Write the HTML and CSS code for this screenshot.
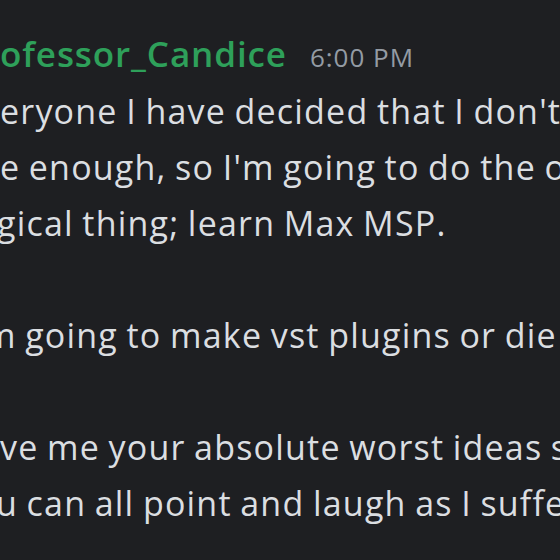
FILE: index.html
```html
<!DOCTYPE html>
<html lang="en">
<head>
<meta charset="utf-8">
<title>Message</title>
<link rel="stylesheet" href="styles.css">
</head>
<body>
<div class="message">
  <div class="header">
    <span class="username">ofessor_Candice</span>
    <span class="time">6:00 PM</span>
  </div>
  <div class="content">
    <div class="line">eryone I have decided that I don't</div>
    <div class="line">e enough, so I'm going to do the obvious</div>
    <div class="line cut-g">gical thing; learn Max MSP.</div>
    <div class="line blank"></div>
    <div class="line cut-m">m going to make vst plugins or die</div>
    <div class="line blank"></div>
    <div class="line">ve me your absolute worst ideas so</div>
    <div class="line cut-u">u can all point and laugh as I suffer</div>
  </div>
</div>
</body>
</html>
```

FILE: styles.css
```css
html, body {
  margin: 0;
  padding: 0;
  background: #1e1f22;
  overflow: hidden;
}
body {
  width: 560px;
  height: 560px;
  font-family: "Open Sans", "Noto Sans", sans-serif;
}
.message {
  padding-top: 32px;
  white-space: nowrap;
}
.header {
  display: flex;
  align-items: baseline;
  gap: 23px;
  height: 51px;
}
.username {
  color: #2ea05a;
  font-size: 35px;
  font-weight: 600;
  letter-spacing: 0.9px;
  line-height: 44px;
}
.time {
  color: #949ba4;
  font-size: 26px;
  letter-spacing: 1px;
  line-height: 44px;
}
.content {
  color: #dbdee1;
  font-size: 34px;
  letter-spacing: 1.2px;
  word-spacing: -1.5px;
  line-height: 56px;
}
.line {
  height: 56px;
}
.cut-g { text-indent: -3px; }
.cut-m { text-indent: -16px; }
.cut-u { text-indent: -4px; }
```
